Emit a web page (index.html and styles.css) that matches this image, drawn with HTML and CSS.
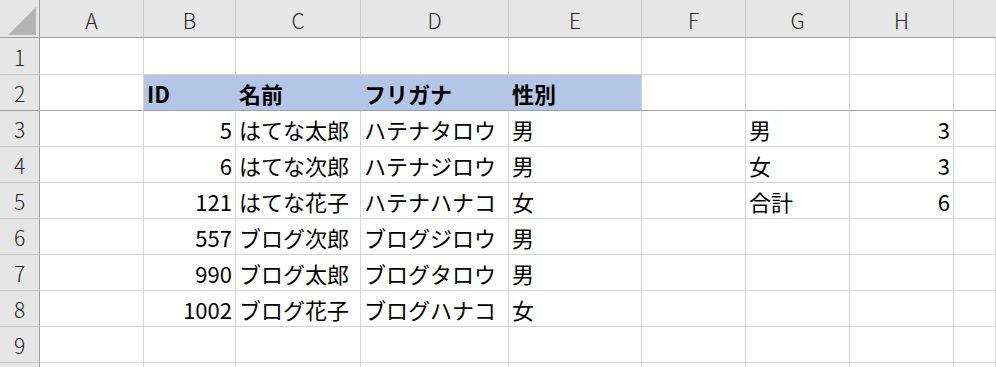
FILE: index.html
```html
<!DOCTYPE html>
<html lang="ja">
<head>
<meta charset="utf-8">
<title>Sheet</title>
<link rel="stylesheet" href="styles.css">
</head>
<body>
<div class="sheet">
  <div class="corner"><span class="tri"></span></div>
  <div class="ch">A</div><div class="ch">B</div><div class="ch">C</div><div class="ch">D</div><div class="ch">E</div><div class="ch">F</div><div class="ch">G</div><div class="ch">H</div><div class="ch last"></div>

  <div class="rh r1">1</div>
  <div class="c r1"></div><div class="c r1"></div><div class="c r1"></div><div class="c r1"></div><div class="c r1"></div><div class="c r1"></div><div class="c r1"></div><div class="c r1"></div><div class="c r1"></div>

  <div class="rh fz">2</div>
  <div class="c fz"></div>
  <div class="c fz hd fill">ID</div>
  <div class="c fz hd fill">名前</div>
  <div class="c fz hd fill">フリガナ</div>
  <div class="c fz hd fill end">性別</div>
  <div class="c fz"></div><div class="c fz"></div><div class="c fz"></div><div class="c fz"></div>

  <div class="rh">3</div>
  <div class="c"></div><div class="c num">5</div><div class="c">はてな太郎</div><div class="c">ハテナタロウ</div><div class="c">男</div><div class="c"></div><div class="c">男</div><div class="c num">3</div><div class="c"></div>

  <div class="rh">4</div>
  <div class="c"></div><div class="c num">6</div><div class="c">はてな次郎</div><div class="c">ハテナジロウ</div><div class="c">男</div><div class="c"></div><div class="c">女</div><div class="c num">3</div><div class="c"></div>

  <div class="rh">5</div>
  <div class="c"></div><div class="c num">121</div><div class="c">はてな花子</div><div class="c">ハテナハナコ</div><div class="c">女</div><div class="c"></div><div class="c">合計</div><div class="c num">6</div><div class="c"></div>

  <div class="rh">6</div>
  <div class="c"></div><div class="c num">557</div><div class="c">ブログ次郎</div><div class="c">ブログジロウ</div><div class="c">男</div><div class="c"></div><div class="c"></div><div class="c"></div><div class="c"></div>

  <div class="rh">7</div>
  <div class="c"></div><div class="c num">990</div><div class="c">ブログ太郎</div><div class="c">ブログタロウ</div><div class="c">男</div><div class="c"></div><div class="c"></div><div class="c"></div><div class="c"></div>

  <div class="rh">8</div>
  <div class="c"></div><div class="c num">1002</div><div class="c">ブログ花子</div><div class="c">ブログハナコ</div><div class="c">女</div><div class="c"></div><div class="c"></div><div class="c"></div><div class="c"></div>

  <div class="rh">9</div>
  <div class="c"></div><div class="c"></div><div class="c"></div><div class="c"></div><div class="c"></div><div class="c"></div><div class="c"></div><div class="c"></div><div class="c"></div>

  <div class="rh stub"></div>
  <div class="c stub"></div><div class="c stub"></div><div class="c stub"></div><div class="c stub"></div><div class="c stub"></div><div class="c stub"></div><div class="c stub"></div><div class="c stub"></div><div class="c stub"></div>
</div>
</body>
</html>
```

FILE: styles.css
```css
html, body {
  margin: 0;
  padding: 0;
  background: #ffffff;
  overflow: hidden;
}
.sheet {
  display: grid;
  grid-template-columns: 40px 104px 92px 125px 148px 133px 104px 104px 104px 1fr;
  grid-template-rows: 38px 37px repeat(8, 36px) 4px;
  width: 996px;
  height: 367px;
  overflow: hidden;
  font-family: "Noto Sans CJK JP", "Noto Sans", sans-serif;
  font-size: 22px;
  color: #000000;
}
.corner {
  position: relative;
  background: #e6e6e6;
  border-right: 1px solid #9f9f9f;
  border-bottom: 1px solid #9f9f9f;
}
.tri {
  position: absolute;
  right: 3px;
  bottom: 2px;
  width: 0;
  height: 0;
  border-left: 28px solid transparent;
  border-bottom: 28px solid #b4b4b4;
}
.ch {
  background: #e6e6e6;
  border-right: 1px solid #c9c9c9;
  border-bottom: 1px solid #9f9f9f;
  display: flex;
  align-items: center;
  justify-content: center;
  padding-top: 3px;
  font-size: 21px;
  font-weight: 300;
  color: #262626;
  line-height: 1;
}
.ch.last {
  border-right: none;
}
.rh {
  background: #e6e6e6;
  border-right: 1px solid #9f9f9f;
  border-bottom: 1px solid #c9c9c9;
  display: flex;
  align-items: center;
  justify-content: center;
  padding-top: 2px;
  font-size: 21px;
  font-weight: 300;
  color: #262626;
  line-height: 1;
}
.c {
  border-right: 1px solid #d4d4d4;
  border-bottom: 1px solid #d4d4d4;
  display: flex;
  align-items: center;
  padding: 1px 3px 0 3px;
  white-space: nowrap;
  overflow: hidden;
  line-height: 1;
}
.c.num {
  justify-content: flex-end;
  padding-right: 3px;
}
.stub {
  border-bottom: none;
  padding: 0;
}
.rh.fz, .c.fz {
  border-bottom-color: #9f9f9f;
}
.fill {
  background: #b4c6e7;
  border-right-color: #b4c6e7;
}
.fill.end {
  border-right-color: #d4d4d4;
}
.hd {
  font-weight: 700;
}
```
